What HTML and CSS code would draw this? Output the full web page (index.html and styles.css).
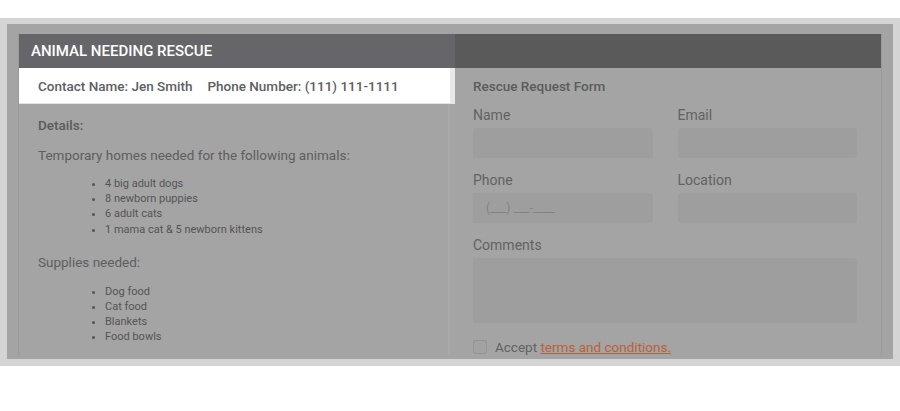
FILE: index.html
```html
<!DOCTYPE html>
<html lang="en">
<head>
  <meta charset="UTF-8">
  <title>Animal Needing Rescue</title>
  <link rel="stylesheet" href="styles.css">
</head>
<body>
  <div class="frame">
    <div class="viewport">
      <div class="card">
        <div class="card-head">
          <div class="head-title spot">ANIMAL NEEDING RESCUE</div>
          <div class="head-rest"></div>
        </div>

        <div class="card-body">
          <div class="col-left">
            <div class="contact spot">
              <span>Contact Name: Jen Smith</span>
              <span>Phone Number: (111) 111-1111</span>
            </div>

            <div class="details">
              <h3>Details:</h3>
              <p>Temporary homes needed for the following animals:</p>
              <ul>
                <li>4 big adult dogs</li>
                <li>8 newborn puppies</li>
                <li>6 adult cats</li>
                <li>1 mama cat &amp; 5 newborn kittens</li>
              </ul>
              <p class="gap">Supplies needed:</p>
              <ul>
                <li>Dog food</li>
                <li>Cat food</li>
                <li>Blankets</li>
                <li>Food bowls</li>
              </ul>
            </div>
          </div>

          <div class="col-right">
            <h3>Rescue Request Form</h3>
            <form class="rescue-form">
              <div class="field">
                <label for="name">Name</label>
                <input type="text" id="name">
              </div>
              <div class="field">
                <label for="email">Email</label>
                <input type="text" id="email">
              </div>
              <div class="field">
                <label for="phone">Phone</label>
                <input type="text" id="phone" placeholder="(___) ___-____">
              </div>
              <div class="field">
                <label for="location">Location</label>
                <input type="text" id="location">
              </div>
              <div class="field wide">
                <label for="comments">Comments</label>
                <textarea id="comments"></textarea>
              </div>
              <div class="field wide accept">
                <span class="box"></span>
                <span>Accept <a href="#">terms and conditions.</a></span>
              </div>
            </form>
          </div>
        </div>
      </div>
    </div>
  </div>
</body>
</html>
```

FILE: styles.css
```css
* {
  box-sizing: border-box;
  margin: 0;
  padding: 0;
}
body {
  font-family: Roboto, "Liberation Sans", sans-serif;
  background: #fff;
  color: #595959;
  padding-top: 18px;
}

/* outer frame + dimmed page */
.frame {
  background: #d4d4d4;
  padding: 6px 7px 7px;
}
.viewport {
  height: 335px;
  overflow: hidden;
  background: #a4a4a4;
  padding: 10px 11px 0;
}
.card {
  border-left: 1px solid #9a9a9a;
  border-right: 1px solid #9a9a9a;
}

/* header */
.card-head {
  display: grid;
  grid-template-columns: 436px 1fr;
  height: 34px;
  background: #5a5a5b;
}
.head-title {
  background: #66656a;
  color: #fff;
  font-size: 15px;
  font-weight: 500;
  line-height: 34px;
  padding-left: 12px;
}

/* body columns */
.card-body {
  display: grid;
  grid-template-columns: 436px 1fr;
}
.col-left {
  box-shadow: inset -5px 0 0 #a4a4a4, inset -7px 0 0 #a9a9a9;
}
.contact {
  background: #fff;
  height: 36px;
  border-right: 5px solid #e8e8e8;
  border-bottom: 1px solid #e3e3e3;
  padding-left: 19px;
  display: flex;
  align-items: center;
  gap: 15px;
  font-size: 13.5px;
  font-weight: 500;
  color: #5d5e62;
}
.details {
  padding: 12px 19px 0;
}
.details h3 {
  font-size: 13.5px;
  font-weight: 500;
  line-height: 18px;
  color: #5b5b5b;
}
.details p {
  font-size: 13.5px;
  line-height: 18px;
  margin-top: 12px;
  color: #5e5e5e;
}
.details p.gap {
  margin-top: 16px;
}
.details ul {
  margin-top: 12px;
  padding-left: 67px;
  font-size: 11px;
  line-height: 15.2px;
  color: #545454;
}
.details ul + p.gap + ul {
  margin-top: 13px;
}

/* form */
.col-right {
  padding: 10px 24px 0 18px;
}
.col-right h3 {
  font-size: 13.5px;
  font-weight: 500;
  line-height: 16px;
  color: #5b5b5b;
}
.rescue-form {
  display: grid;
  grid-template-columns: 1fr 1fr;
  column-gap: 25px;
  row-gap: 13px;
  margin-top: 12px;
}
.field.wide {
  grid-column: 1 / 3;
}
.field label {
  display: block;
  font-size: 14px;
  line-height: 18px;
  color: #626262;
  margin-bottom: 4px;
}
.field input, .field textarea {
  display: block;
  width: 100%;
  height: 30px;
  background: #9e9e9e;
  border: none;
  border-radius: 3px;
  padding: 0 13px;
  font-family: inherit;
  font-size: 12px;
  resize: none;
}
.field textarea {
  height: 65px;
}
.field input::placeholder {
  color: #828282;
}
.accept {
  display: flex;
  align-items: center;
  gap: 8px;
  margin-top: 3px;
  font-size: 13.5px;
  color: #626262;
}
.box {
  width: 14px;
  height: 14px;
  border: 1px solid #949494;
  border-radius: 2px;
  background: #a2a2a2;
}
.accept a {
  color: #b9613d;
}
```
